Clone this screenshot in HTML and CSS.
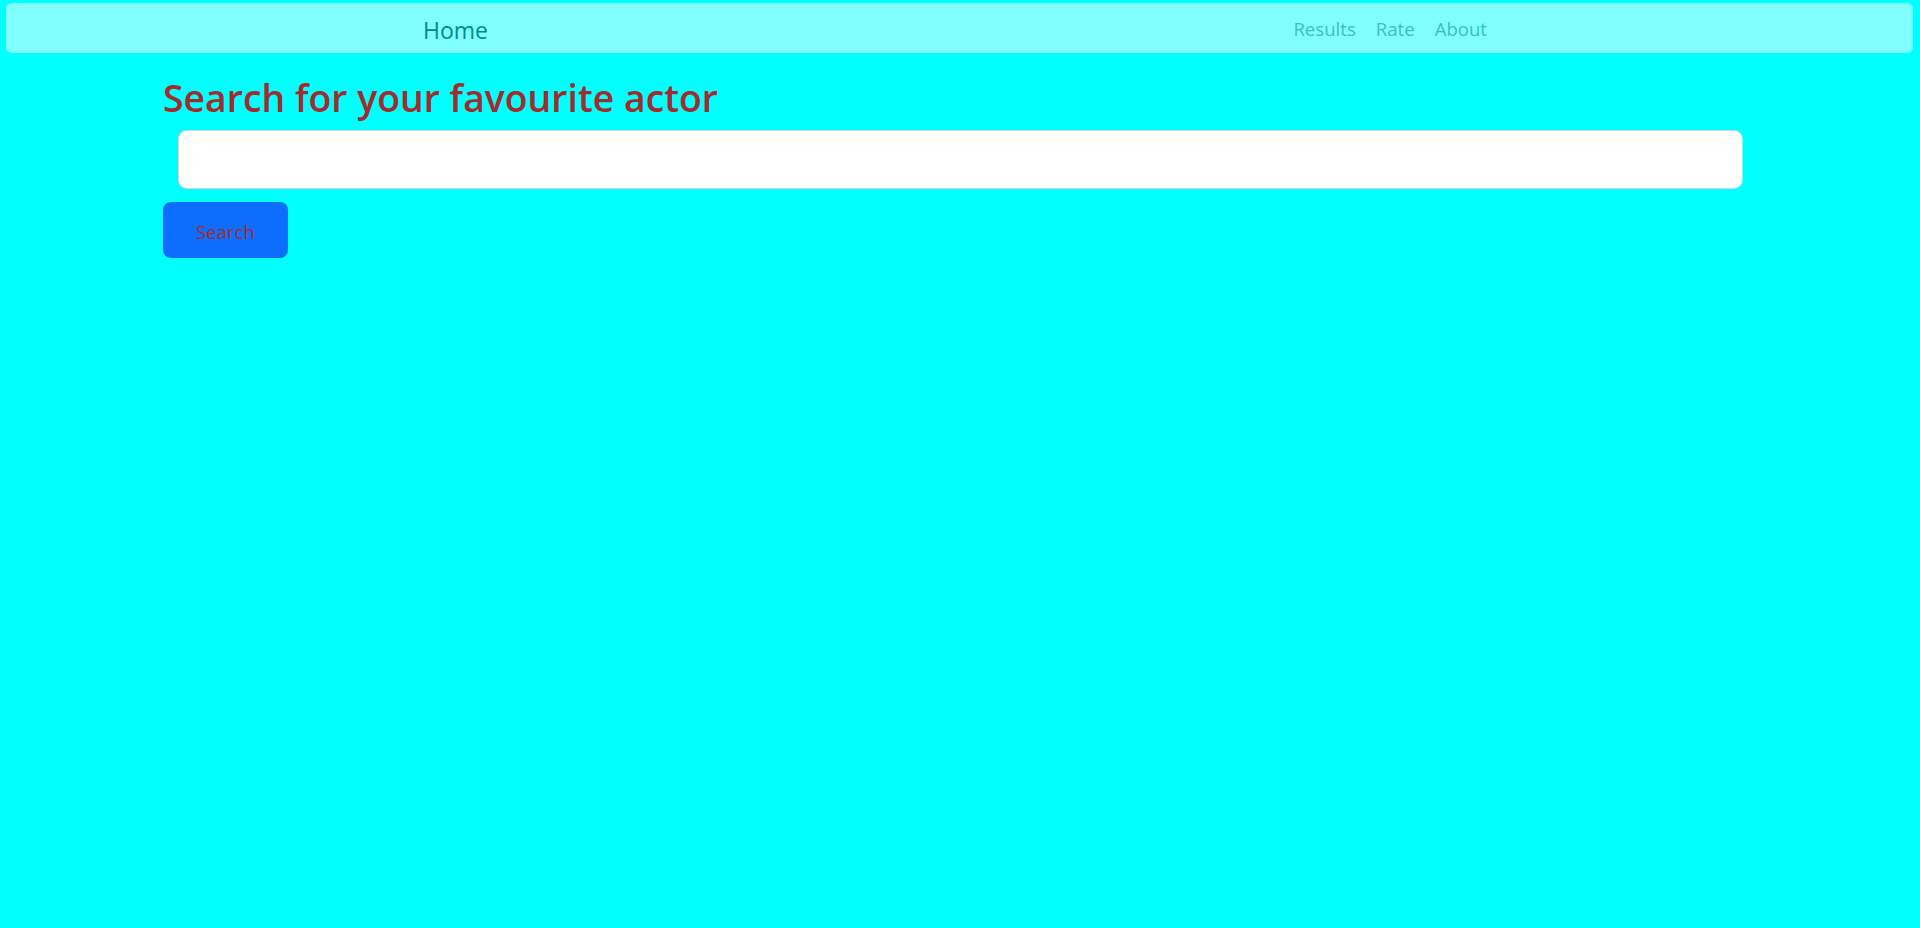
FILE: index.html
```html
<!DOCTYPE html>
<html lang="en">
<head>
<meta charset="utf-8">
<title>Actor search</title>
<link rel="stylesheet" href="styles.css">
</head>
<body>
<nav class="navbar">
  <div class="nav-inner">
    <a class="brand" href="#">Home</a>
    <div class="links">
      <a class="link" href="#">Results</a>
      <a class="link" href="#">Rate</a>
      <a class="link" href="#">About</a>
    </div>
  </div>
</nav>
<main class="container">
  <h2 class="title">Search for your favourite actor</h2>
  <div class="field">
    <input class="search-input" type="text">
  </div>
  <button class="search-btn" type="button">Search</button>
</main>
</body>
</html>
```

FILE: styles.css
```css
html, body {
  margin: 0;
  padding: 0;
}
body {
  background: #00ffff;
  font-family: "Open Sans", "Noto Sans", sans-serif;
}
.navbar {
  margin: 3px 7px 0 6px;
  height: 50px;
  background: #80ffff;
  border-radius: 6px;
}
.nav-inner {
  width: 1073px;
  margin: 0 auto;
  display: flex;
  justify-content: space-between;
  align-items: flex-start;
}
.brand {
  margin-top: 12px;
  font-size: 23px;
  line-height: 30px;
  color: #008b8b;
  text-decoration: none;
}
.links {
  display: flex;
  margin-top: 14px;
  margin-right: -1px;
}
.link {
  padding: 0 10px;
  font-size: 18.6px;
  line-height: 24px;
  color: #3abfbf;
  text-decoration: none;
}
.container {
  width: 1594px;
  margin: 0 auto;
}
.title {
  margin: 21px 0 0 0;
  font-size: 37.4px;
  line-height: 48px;
  font-weight: 600;
  color: #a52a2a;
}
.field {
  padding: 0 14px 0 15px;
  margin-top: 8px;
}
.search-input {
  display: block;
  box-sizing: border-box;
  width: 100%;
  height: 59px;
  border: 1px solid #ced4da;
  border-radius: 9px;
  background: #fff;
  outline: none;
}
.search-btn {
  display: block;
  margin-top: 13px;
  width: 125px;
  height: 56px;
  padding: 4px 0 0 0;
  border: none;
  border-radius: 8px;
  background: #0d6efd;
  color: #a52a2a;
  font-family: "Open Sans", "Noto Sans", sans-serif;
  font-size: 18.5px;
  line-height: 24px;
}
```
